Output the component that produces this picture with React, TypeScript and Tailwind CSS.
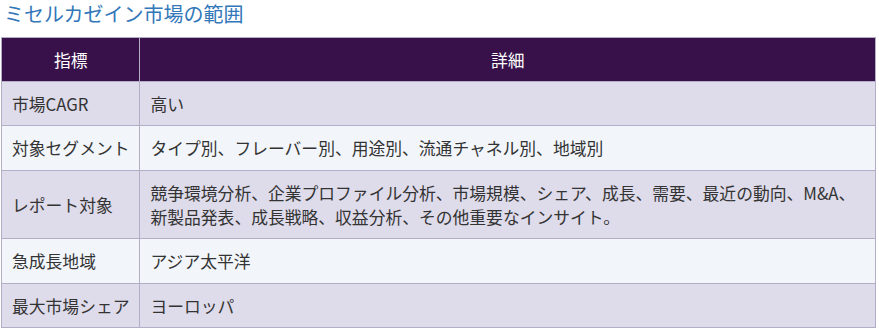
const rows = [
  { label: "市場CAGR", detail: ["高い"], h: "h-[44px]" },
  { label: "対象セグメント", detail: ["タイプ別、フレーバー別、用途別、流通チャネル別、地域別"], h: "h-[45px]" },
  {
    label: "レポート対象",
    detail: [
      "競争環境分析、企業プロファイル分析、市場規模、シェア、成長、需要、最近の動向、M&A、",
      "新製品発表、成長戦略、収益分析、その他重要なインサイト。",
    ],
    h: "h-[68px]",
  },
  { label: "急成長地域", detail: ["アジア太平洋"], h: "h-[45px]" },
  { label: "最大市場シェア", detail: ["ヨーロッパ"], h: "h-[44px]" },
];

export default function App() {
  return (
    <div className="h-[331px] w-[879px] overflow-hidden bg-white pl-px font-['Noto_Sans_CJK_JP','Noto_Sans',sans-serif] text-[#333]">
      <h2 className="pl-[3px] pt-[1px] text-[20px] leading-[26px] font-normal text-[#3277b9]">
        ミセルカゼイン市場の範囲
      </h2>
      <table className="mt-[10px] w-[875px] border-collapse text-[16.8px] leading-[24px]">
        <thead>
          <tr className="bg-[#38114b] text-white">
            <th className="h-[44px] w-[137px] border border-[#b3adc6] px-[10px] py-0 text-center font-normal">指標</th>
            <th className="h-[44px] border border-[#b3adc6] px-[10px] py-0 text-center font-normal">詳細</th>
          </tr>
        </thead>
        <tbody>
          {rows.map((r, i) => (
            <tr key={r.label} className={i % 2 === 0 ? "bg-[#dedbea]" : "bg-[#f2f6fb]"}>
              <td className={`${r.h} border border-[#b3adc6] px-[10px] py-0 align-middle whitespace-nowrap`}>
                {r.label}
              </td>
              <td className={`${r.h} border border-[#b3adc6] px-[10px] py-0 align-middle`}>
                {r.detail.map((line) => (
                  <div key={line} className="h-[24px] whitespace-nowrap">
                    {line}
                  </div>
                ))}
              </td>
            </tr>
          ))}
        </tbody>
      </table>
    </div>
  );
}
